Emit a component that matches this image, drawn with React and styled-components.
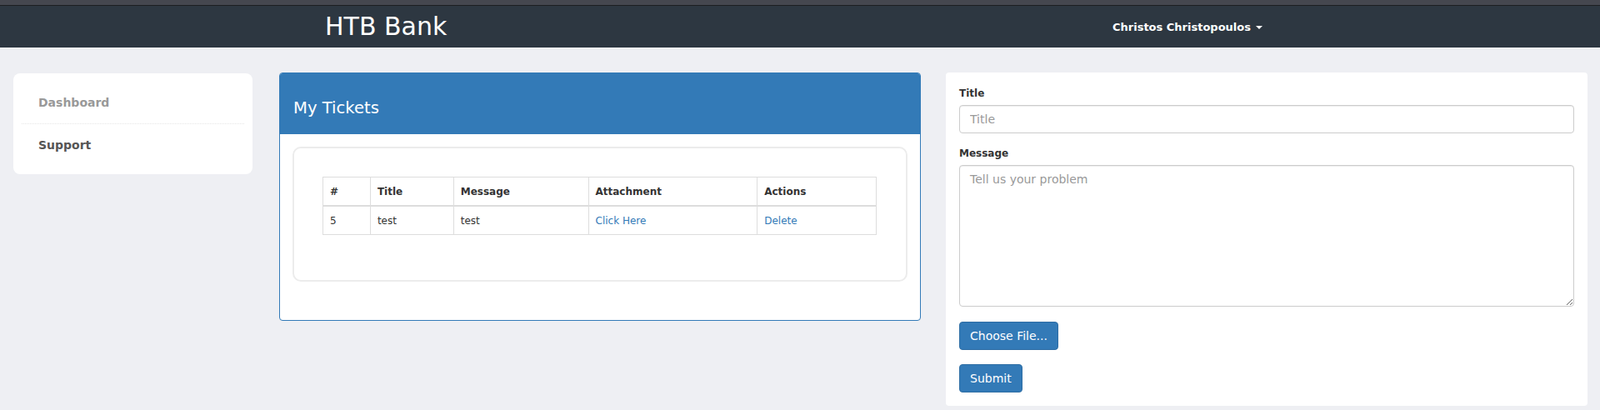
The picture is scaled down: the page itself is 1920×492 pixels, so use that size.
import React from "react";
import styled, { createGlobalStyle } from "styled-components";

const GlobalStyle = createGlobalStyle`
  html, body {
    margin: 0;
    padding: 0;
    background: #eeeff3;
    font-family: "DejaVu Sans", Verdana, sans-serif;
    color: #333;
  }
  * { box-sizing: border-box; }
`;

const TopStrip = styled.div`
  height: 7px;
  background: #45474f;
  border-bottom: 1px solid #1d1e21;
`;

const Navbar = styled.nav`
  height: 50px;
  background: #2d3741;
  display: flex;
  align-items: center;
  padding-left: 390px;
`;

const Brand = styled.div`
  font-size: 30px;
  color: #fff;
  line-height: 50px;
  width: 945px;
`;

const UserMenu = styled.div`
  font-size: 13px;
  font-weight: bold;
  color: #fff;
  display: flex;
  align-items: center;
  gap: 6px;
`;

const Caret = styled.span`
  width: 0;
  height: 0;
  border-left: 4px solid transparent;
  border-right: 4px solid transparent;
  border-top: 4px solid #fff;
  margin-top: 2px;
`;

const Page = styled.div`
  display: flex;
  align-items: flex-start;
  padding: 30px 15px 0 16px;
`;

const Sidebar = styled.ul`
  list-style: none;
  margin: 1px 32px 0 0;
  padding: 10px;
  width: 287px;
  background: #fff;
  border-radius: 8px;
`;

const SideItem = styled.li`
  padding: 16px 20px;
  line-height: 18px;
  font-size: 14px;
  font-weight: bold;
  color: ${(p) => (p.$muted ? "#999" : "#555")};
  border-top: ${(p) => (p.$first ? "none" : "1px dotted #e6e6e6")};
`;

const Panel = styled.section`
  width: 770px;
  margin-right: 30px;
  background: #fff;
  border: 1px solid #337ab7;
  border-radius: 4px;
  overflow: hidden;
`;

const PanelHeading = styled.div`
  background: #337ab7;
  color: #fff;
  height: 73px;
  padding: 30px 16px 0;
  font-size: 19.6px;
  line-height: 24px;
`;

const PanelBody = styled.div`
  padding: 15px 15px 46px;
`;

const InnerCard = styled.div`
  border: 2px solid #ececec;
  border-radius: 10px;
  padding: 34px 34px 54px;
`;

const Table = styled.table`
  width: 665px;
  border-collapse: collapse;
  font-size: 12px;
  line-height: 17px;
  color: #333;
`;

const Th = styled.th`
  text-align: left;
  font-weight: bold;
  padding: 9px 8px 7px;
  border: 1px solid #ddd;
  border-bottom: 2px solid #ddd;
  width: ${(p) => p.$w}px;
`;

const Td = styled.td`
  padding: 9px 8px 7px;
  border: 1px solid #ddd;
`;

const Link = styled.a`
  color: #337ab7;
  text-decoration: none;
`;

const FormCard = styled.form`
  width: 770px;
  background: #fff;
  border-radius: 4px;
  padding: 17px 16px 16px;
`;

const Label = styled.label`
  display: block;
  font-size: 12px;
  font-weight: bold;
  line-height: 17px;
  margin-bottom: 5px;
  color: #333;
`;

const Group = styled.div`
  margin-bottom: ${(p) => p.$mb}px;
`;

const TextInput = styled.input`
  display: block;
  width: 100%;
  height: 34px;
  padding: 6px 12px;
  font-family: inherit;
  font-size: 14px;
  color: #555;
  border: 1px solid #ccc;
  border-radius: 4px;
  box-shadow: inset 0 1px 1px rgba(0, 0, 0, 0.075);
  &::placeholder { color: #999; }
`;

const TextArea = styled.textarea`
  display: block;
  width: 100%;
  height: 170px;
  padding: 6px 12px;
  font-family: inherit;
  font-size: 14px;
  line-height: 20px;
  color: #555;
  border: 1px solid #ccc;
  border-radius: 4px;
  box-shadow: inset 0 1px 1px rgba(0, 0, 0, 0.075);
  &::placeholder { color: #999; }
`;

const Button = styled.button`
  display: inline-block;
  height: 34px;
  padding: 6px 12px;
  font-family: inherit;
  font-size: 14px;
  line-height: 20px;
  color: #fff;
  background: #337ab7;
  border: 1px solid #2e6da4;
  border-radius: 4px;
`;

const tickets = [
  { id: 5, title: "test", message: "test" },
];

export default function App() {
  return (
    <>
      <GlobalStyle />
      <TopStrip />
      <Navbar>
        <Brand>HTB Bank</Brand>
        <UserMenu>
          Christos Christopoulos <Caret />
        </UserMenu>
      </Navbar>
      <Page>
        <Sidebar>
          <SideItem $first $muted>Dashboard</SideItem>
          <SideItem>Support</SideItem>
        </Sidebar>
        <Panel>
          <PanelHeading>My Tickets</PanelHeading>
          <PanelBody>
            <InnerCard>
              <Table>
                <thead>
                  <tr>
                    <Th $w={57}>#</Th>
                    <Th $w={100}>Title</Th>
                    <Th $w={162}>Message</Th>
                    <Th $w={203}>Attachment</Th>
                    <Th $w={143}>Actions</Th>
                  </tr>
                </thead>
                <tbody>
                  {tickets.map((t) => (
                    <tr key={t.id}>
                      <Td>{t.id}</Td>
                      <Td>{t.title}</Td>
                      <Td>{t.message}</Td>
                      <Td><Link href="#">Click Here</Link></Td>
                      <Td><Link href="#">Delete</Link></Td>
                    </tr>
                  ))}
                </tbody>
              </Table>
            </InnerCard>
          </PanelBody>
        </Panel>
        <FormCard onSubmit={(e) => e.preventDefault()}>
          <Group $mb={16}>
            <Label>Title</Label>
            <TextInput placeholder="Title" />
          </Group>
          <Group $mb={18}>
            <Label>Message</Label>
            <TextArea placeholder="Tell us your problem" />
          </Group>
          <Group $mb={17}>
            <Button type="button">Choose File...</Button>
          </Group>
          <Button type="submit">Submit</Button>
        </FormCard>
      </Page>
    </>
  );
}
